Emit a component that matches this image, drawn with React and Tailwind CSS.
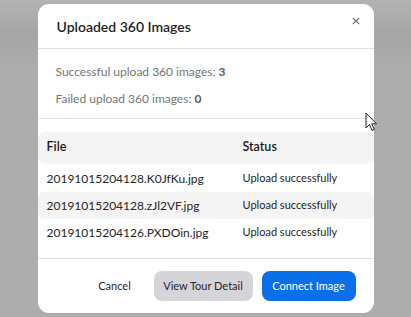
import React from "react";

const rows = [
  { file: "20191015204128.K0JfKu.jpg", status: "Upload successfully", shaded: false },
  { file: "20191015204128.zJl2VF.jpg", status: "Upload successfully", shaded: true },
  { file: "20191015204126.PXDOin.jpg", status: "Upload successfully", shaded: false },
];

export default function App() {
  return (
    <div
      className="w-[411px] h-[317px] overflow-hidden flex justify-center pt-[4px] bg-[linear-gradient(to_bottom,#b3b3b3_0px,#a6a6a6_32px,#adadad_70px,#adadad_100%)]"
      style={{ fontFamily: '"Segoe UI", Lato, "Noto Sans", sans-serif' }}
    >
      <div className="relative w-[336px] h-[309px] bg-white rounded-[11px] flex flex-col">
        <button className="absolute right-[13px] top-[12px] w-[10px] h-[10px] flex items-center justify-center text-[#666]">
          <svg width="8" height="8" viewBox="0 0 8 8" fill="none">
            <path d="M0.8 0.8 L7.2 7.2 M7.2 0.8 L0.8 7.2" stroke="#6b6b6b" strokeWidth="1.2" />
          </svg>
        </button>
        <div className="h-[45px] flex items-center pl-[19px] border-b border-[#e2e2e2]">
          <h2 className="text-[14px] font-semibold text-[#1f1f1f] leading-none mt-[1px]">
            Uploaded 360 Images
          </h2>
        </div>
        <div className="h-[70px] flex flex-col pl-[18px] pt-[13px] gap-[7px] border-b border-[#e2e2e2] text-[12px] text-[#767676]">
          <div className="h-[20px] flex items-center">
            Successful upload 360 images:&nbsp;<span className="font-bold text-[#5f5f5f]">3</span>
          </div>
          <div className="h-[20px] flex items-center">
            Failed upload 360 images:&nbsp;<span className="font-bold text-[#5f5f5f]">0</span>
          </div>
        </div>
        <div className="pt-[13px] pb-[12px] border-b border-[#e2e2e2] text-[12px]">
          <div className="h-[31px] flex items-center bg-[#f4f4f4] rounded-[7px] shadow-[0_1px_2px_rgba(0,0,0,0.04)] font-semibold text-[#1a1a1a] text-[12.5px]">
            <div className="pl-[9px] w-[205px]">File</div>
            <div>Status</div>
          </div>
          <div className="mt-[2px] flex flex-col">
            {rows.map((r) => (
              <div
                key={r.file}
                className={
                  "h-[27px] flex items-center text-[#262626] rounded-[6px] " +
                  (r.shaded ? "bg-[#f4f4f4]" : "")
                }
              >
                <div className="pl-[9px] w-[205px]">{r.file}</div>
                <div className="text-[11px]">{r.status}</div>
              </div>
            ))}
          </div>
        </div>
        <div className="flex-1 flex items-center justify-end pr-[18px] gap-[9px] text-[11px]">
          <button className="h-[30px] w-[54px] text-[#1f1f1f] flex items-center justify-center mr-[3px]">
            Cancel
          </button>
          <button className="h-[30px] w-[99px] rounded-[8px] bg-[#d5d5d9] text-[#262626] flex items-center justify-center">
            View Tour Detail
          </button>
          <button className="h-[30px] w-[94px] rounded-[8px] bg-[#0a70ea] text-white flex items-center justify-center">
            Connect Image
          </button>
        </div>
      </div>
      <svg
        className="absolute left-[365px] top-[112px]"
        width="13"
        height="20"
        viewBox="0 0 13 20"
      >
        <path d="M1 1 L1 16 L4.5 12.5 L7 18.5 L9.3 17.5 L6.8 11.8 L11.5 11.8 Z" fill="white" stroke="#222" strokeWidth="1" strokeLinejoin="round" />
      </svg>
    </div>
  );
}
